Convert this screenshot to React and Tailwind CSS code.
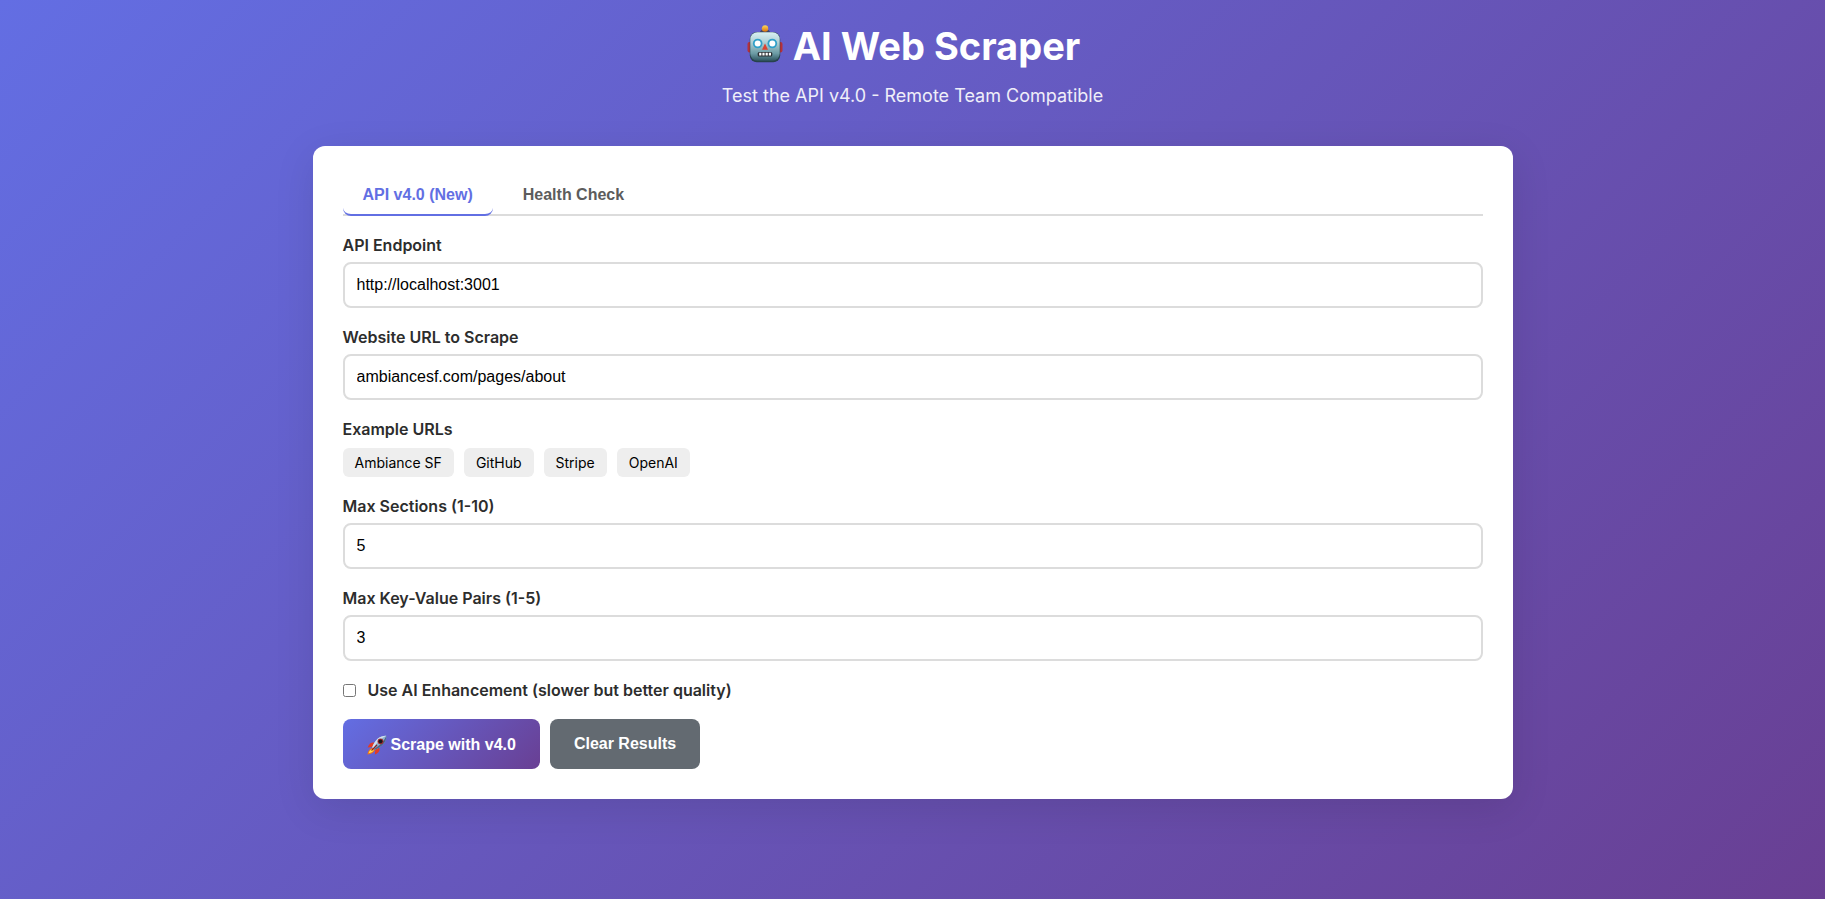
import { useState } from "react";

function RobotIcon() {
  return (
    <svg viewBox="0 0 40 40" className="-mt-1 h-10 w-10 shrink-0" aria-hidden="true">
      <defs>
        <linearGradient id="robotFace" x1="0" y1="0" x2="0" y2="1">
          <stop offset="0" stopColor="#d9f1f3" />
          <stop offset="0.35" stopColor="#b0d0d5" />
          <stop offset="0.75" stopColor="#6a9aa3" />
          <stop offset="1" stopColor="#2f5560" />
        </linearGradient>
        <linearGradient id="robotBulb" x1="0" y1="0" x2="0" y2="1">
          <stop offset="0" stopColor="#ffd95a" />
          <stop offset="1" stopColor="#d9730f" />
        </linearGradient>
      </defs>
      <path d="M15 8.500q0-3 5-3t5 3z" fill="#3d4763" />
      <circle cx="20" cy="4.500" r="3.200" fill="url(#robotBulb)" />
      <rect x="2.500" y="18" width="5" height="10.500" rx="2" fill="#b5303a" />
      <rect x="32.500" y="18" width="5" height="10.500" rx="2" fill="#b5303a" />
      <rect x="4.800" y="8" width="30.400" height="30.300" rx="7" fill="#27424c" />
      <rect x="5.300" y="8.200" width="29.400" height="28.600" rx="7" fill="url(#robotFace)" />
      <circle cx="12.700" cy="19.500" r="4.800" fill="#2f9fc8" />
      <circle cx="27.300" cy="19.500" r="4.800" fill="#2f9fc8" />
      <circle cx="12.700" cy="19.500" r="3" fill="#fff" />
      <circle cx="27.300" cy="19.500" r="3" fill="#fff" />
      <path d="M20 19.500l3 6.300h-6z" fill="#dc4331" />
      <rect x="12.700" y="28" width="14.600" height="4.400" rx="1.500" fill="#2a2f33" />
      <path d="M14.200 28.800h2.200v2.800h-2.200zM17.400 28.800h2.200v2.800h-2.200zM20.600 28.800h2.200v2.800h-2.200zM23.800 28.800h2.200v2.800h-2.200z" fill="#fff" />
    </svg>
  );
}

function RocketIcon() {
  return (
    <svg viewBox="0 0 20 20" className="h-5 w-5 shrink-0" aria-hidden="true">
      <path d="M6.500 12.500C3 13 .8 15.500 .4 19.400c4-.2 6.900-2 7.600-5z" fill="#f0701c" />
      <path d="M6 13.800c-2.200.3-3.700 2-4.400 4.400 2.400-.4 4.300-1.500 5.300-3.300z" fill="#ffe04a" />
      <path d="M8 7.800C4.600 6.800 2 8.800.6 12.600l5-.6z" fill="#e33b26" />
      <path d="M12.200 12.200c1.100 3.400-.8 6-4.300 7.300l.4-5.100z" fill="#e33b26" />
      <path d="M19.300.8C13.500.5 8.200 4.200 5.200 12.200l2.600 2.600C15.800 11.800 19.500 6.600 19.300.8z" fill="#8fb0cf" />
      <path d="M19.300.8C13.500.5 8.200 4.200 5.200 12.200l1 1C10 7 14.500 3 19.300.8z" fill="#cfe0ef" />
      <path d="M19.300.8c.2 5.800-3.500 11-11.500 14l-.9-.9C13.500 10.500 17 6 19.300.8z" fill="#4a6785" />
      <circle cx="13.500" cy="6.300" r="2.900" fill="#a3262a" />
      <circle cx="13.500" cy="6.300" r="1.900" fill="#17181d" />
      <path d="M9.700 10.300L4.900 15.100" stroke="#8d1f1f" strokeWidth="1.300" strokeLinecap="round" />
    </svg>
  );
}

function Field({ id, label, ...props }) {
  return (
    <div>
      <label htmlFor={id} className="mb-2 block text-base leading-[18px] font-semibold">
        {label}
      </label>
      <input
        id={id}
        className="block w-full appearance-none rounded-lg border-2 border-[#dcdcdc] bg-white p-3 font-['Liberation_Sans',Arial,sans-serif] text-base leading-[18px] text-black outline-none focus:border-[#626fe3] [&::-webkit-inner-spin-button]:appearance-none"
        {...props}
      />
    </div>
  );
}

const examples = [
  ["Ambiance SF", "ambiancesf.com/pages/about"],
  ["GitHub", "github.com"],
  ["Stripe", "stripe.com"],
  ["OpenAI", "openai.com"],
];

const tabs = ["API v4.0 (New)", "Health Check"];

export default function App() {
  const [tab, setTab] = useState(tabs[0]);
  const [url, setUrl] = useState("ambiancesf.com/pages/about");

  return (
    <div className="min-h-screen bg-[linear-gradient(135deg,#636ee3_0%,#693f93_100%)] p-5 font-[Inter,sans-serif] text-[#2d2d2d]">
      <div className="mx-auto max-w-[1200px]">
        <header className="mb-[38px] text-center text-white">
          <h1 className="flex items-center justify-center gap-2 text-[38px] leading-[52px] font-bold">
            <RobotIcon />
            AI Web Scraper
          </h1>
          <p className="mt-3 text-lg leading-6 opacity-90">Test the API v4.0 - Remote Team Compatible</p>
        </header>

        <main className="rounded-xl bg-white p-[30px] shadow-[0_10px_40px_rgba(0,0,0,0.1)]">
          <div role="tablist" className="mb-5 flex gap-2.5 border-b-2 border-[#dcdcdc] font-['Liberation_Sans',Arial,sans-serif]">
            {tabs.map((name) => (
              <button
                key={name}
                type="button"
                role="tab"
                aria-selected={tab === name}
                onClick={() => setTab(name)}
                className={
                  "-mb-0.5 cursor-pointer rounded-lg border-b-2 px-5 py-2.5 text-base leading-[18px] font-bold " +
                  (tab === name ? "border-[#626fe3] text-[#626fe3]" : "border-transparent text-[#5c5c5c]")
                }
              >
                {name}
              </button>
            ))}
          </div>

          <form className="flex flex-col gap-5" onSubmit={(e) => e.preventDefault()}>
            <Field id="endpoint" label="API Endpoint" type="text" defaultValue="http://localhost:3001" />
            <Field
              id="url"
              label="Website URL to Scrape"
              type="text"
              value={url}
              onChange={(e) => setUrl(e.target.value)}
            />
            <div role="group" aria-labelledby="examples">
              <div id="examples" className="mb-2.5 text-base leading-[18px] font-semibold">
                Example URLs
              </div>
              <div className="flex flex-wrap gap-2.5">
                {examples.map(([name, value]) => (
                  <button
                    key={name}
                    type="button"
                    onClick={() => setUrl(value)}
                    className="cursor-pointer rounded-md bg-[#eeeeee] px-3 py-1.5 text-sm leading-[17px] text-black"
                  >
                    {name}
                  </button>
                ))}
              </div>
            </div>
            <Field id="sections" label="Max Sections (1-10)" type="number" min="1" max="10" defaultValue="5" />
            <Field id="pairs" label="Max Key-Value Pairs (1-5)" type="number" min="1" max="5" defaultValue="3" />
            <label className="flex items-center gap-3 self-start text-base leading-[18px] font-semibold">
              <input type="checkbox" className="h-[13px] w-[13px]" />
              Use AI Enhancement (slower but better quality)
            </label>
            <div className="flex flex-wrap gap-2.5 font-['Liberation_Sans',Arial,sans-serif] text-base leading-[18px] font-bold text-white">
              <button
                type="submit"
                className="flex cursor-pointer items-center gap-1 rounded-lg bg-[linear-gradient(135deg,#636ee3_0%,#693f93_100%)] px-6 pt-4 pb-3.5"
              >
                <RocketIcon />
                Scrape with v4.0
              </button>
              <button type="button" className="cursor-pointer rounded-lg bg-[#636a71] px-6 py-4">
                Clear Results
              </button>
            </div>
          </form>
        </main>
      </div>
    </div>
  );
}
